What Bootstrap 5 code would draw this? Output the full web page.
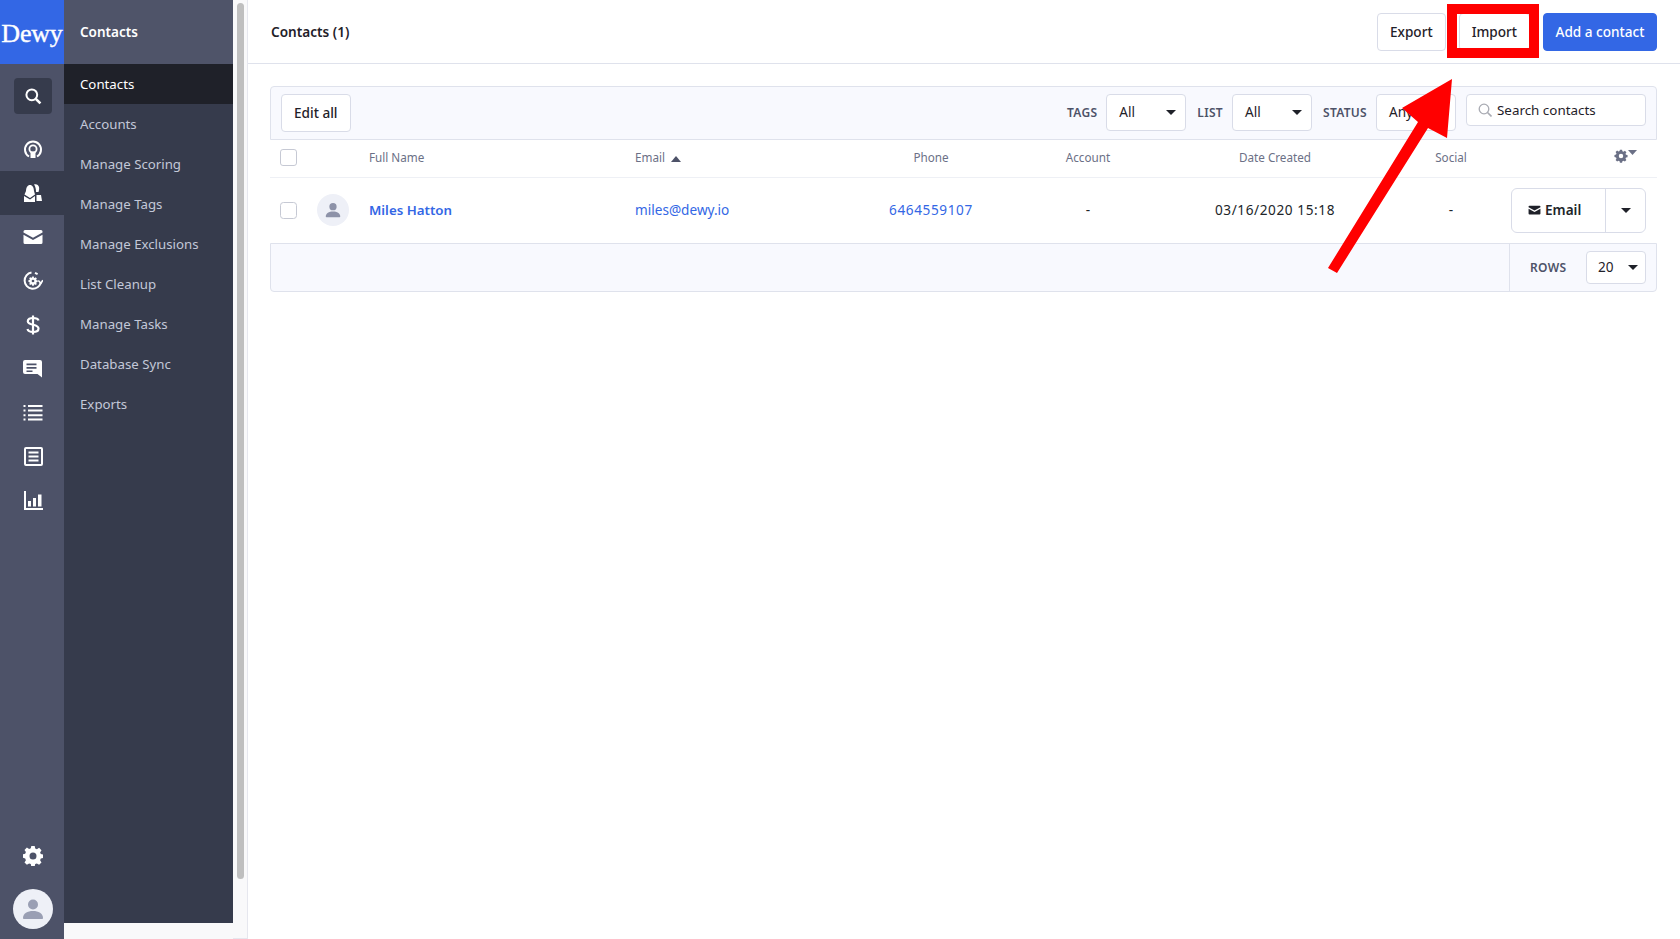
<!DOCTYPE html>
<html lang="en">
<head>
<meta charset="utf-8">
<title>Dewy Contacts</title>
<link href="https://cdn.jsdelivr.net/npm/bootstrap@5.3.0/dist/css/bootstrap.min.css" rel="stylesheet">
<style>
html,body{height:100%;overflow:hidden}
body{font-family:"Noto Sans","Liberation Sans",sans-serif;font-size:14px;color:#1f2129;background:#fff}
.shell{height:939px;width:1680px}
.rail{width:64px;background:#4d5268;flex:none}
.logo-box{height:64px;background:#3367e5;color:#fff;font-family:"Liberation Serif",serif;font-size:26px;font-weight:400;-webkit-text-stroke:.4px #fff;letter-spacing:-.2px;padding-top:2px}
.rail-search{width:38px;height:36px;background:#363b4c;border-radius:4px;margin:14px 0 13px 14px}
.rail-item{height:44px;color:#fff;padding-left:2px}
.rail-item.on{background:#363b4c}
.rail-item.lift{padding-bottom:2px}
.rail-ava{width:40px;height:40px;border-radius:50%;background:#eef0f7;margin:11px 0 10px 13px}
.side-col{width:169px;flex:none;background:#f9f9fa}
.side-head{height:64px;background:#4f5469;color:#fff;font-weight:600;font-size:13.5px;padding-left:16px}
.side-panel{height:859px;background:#363b4c}
.side-link{height:40px;padding:2px 0 0 16px;color:#c3c8d8;text-decoration:none;font-size:13.25px}
.side-link.on{background:#1f2129;color:#fff}
.scroll-col{width:15px;flex:none;background:#f9f9fa;border-right:1px solid #e6e7ee;border-bottom:1px solid #e6e7ee;padding:3px 3px 0 4px}
.scroll-thumb{height:876px;background:#bfbfbf;border-radius:4px}
.main-col{min-width:0;position:relative}
.top-bar{height:64px;border-bottom:1px solid #dfe2ec;padding:1px 23px 0 23px}
.top-title{font-weight:600;font-size:13.6px}
.tbtn{height:38px;padding:0 12px;font-size:13.6px;font-weight:500;border:1px solid #d9dce8;background:#fff;color:#1f2129;border-radius:4px;display:flex;align-items:center}
.tbtn.mr-imp{margin-left:13px;margin-right:13px}
.tbtn.go{background:#3367e5;border-color:#3367e5;color:#fff;padding:0 11.500px}
.tool-wrap{padding:22px 23px 0 22px}
.tool-row{height:54px;background:#f8f9fe;border:1px solid #dfe2ec;border-radius:4px 4px 0 0;padding:7px 10px 0 10px}
.lbl{font-size:12px;font-weight:600;color:#4d5268;letter-spacing:.3px}
.tool-row .lbl{margin:10px 9px 0 11px}
.pick{width:80px;height:37px;background:#fff;border:1px solid #d9dce8;border-radius:4px;padding:0 9px 0 12px;font-size:13.6px;color:#1f2129}
.pick::after{margin:0;border-top-width:.38em;border-left-width:.38em;border-right-width:.38em}
.search-box{width:180px;height:32px;background:#fff;border:1px solid #d9dce8;border-radius:4px;padding:0 11px;font-size:13.4px;margin-left:10px;gap:5px}
.grid-t{table-layout:fixed;width:1387px;margin:0}
.grid-t th{height:37px;padding:0 0 1px;font-weight:400;font-size:11.7px;color:#6b7086;border-bottom:1px solid #eef0f5;vertical-align:middle}
.grid-t td{height:66px;padding:0;font-size:13.6px;border-bottom:0;vertical-align:middle}
.cbox{width:17px;height:17px;margin:0 0 0 10px;border:1px solid #c6c9d4;border-radius:2px;display:block;float:none}
.ava-sm{width:32px;height:32px;border-radius:50%;background:#eef0f7;margin-left:1px}
.txt-link{color:#3367e5;text-decoration:none}
.name-link{font-weight:600;font-size:13.3px}
.cell-text{padding-left:9px!important}
.num-t{letter-spacing:.6px}
.sort-mark{margin-left:3px}
.gear-cell{padding-right:20px!important;padding-bottom:6px!important}
.mail-group{width:135px;height:45px;border:1px solid #d9dce8;border-radius:6px;margin-left:-16px}
.mail-main{width:94px;font-weight:600;font-size:13.6px;border-right:1px solid #d9dce8;padding-left:16px}
.foot-row{height:49px;background:#f8f9fe;border:1px solid #dfe2ec;border-radius:0 0 4px 4px}
.foot-end{width:147px;border-left:1px solid #dfe2ec;padding:0 10px 0 20px}
.rows-pick{width:60px;height:33px;background:#fff;border:1px solid #d9dce8;border-radius:4px;padding:0 7px 0 11px;font-size:13.6px}
.caret-d{width:0;height:0;border-left:5px solid transparent;border-right:5px solid transparent;border-top:5px solid #1f2129}
.anno{position:absolute;left:0;top:0;pointer-events:none}
</style>
</head>
<body>
<div class="shell d-flex">
  <nav class="rail d-flex flex-column">
    <div class="logo-box d-flex align-items-center justify-content-center">Dewy</div>
    <div class="rail-search d-flex align-items-center justify-content-center">
      <svg width="18" height="18" viewBox="0 0 18 18" fill="none" stroke="#fff" stroke-width="2"><circle cx="7.8" cy="7.8" r="5.4"/><path d="M11.8 11.8l4.6 4.6" stroke-width="2.6"/></svg>
    </div>
    <div class="rail-item d-flex align-items-center justify-content-center">
      <svg width="20" height="20" viewBox="0 0 20 20" fill="none" stroke="#fff"><path d="M6 17.5A8 8 0 1 1 14 17.5" stroke-width="2"/><circle cx="10" cy="10" r="3.6" stroke-width="1.8"/><path fill="#fff" stroke="none" d="M7.5 12.5h5V19h-5z"/></svg>
    </div>
    <div class="rail-item on d-flex align-items-center justify-content-center">
      <svg width="20" height="20" viewBox="0 0 20 20" fill="#fff"><path d="M11 1.500c2.500-.8 4.500.5 5 2.500.4 1.500 0 3.500-.5 5h-2.500C13 6 12.500 3.500 11 1.500z"/><path d="M7 2c2.500 0 3.800 2.500 4 6l1 3.500L7 15 1.500 11.500 3 8c.2-3.500 1.500-6 4-6z"/><path d="M1 13l6 3.500 5-3.500V19H1z"/><path d="M13.500 12H18l1 6h-5.500z"/></svg>
    </div>
    <div class="rail-item d-flex align-items-center justify-content-center">
      <svg width="20" height="16" viewBox="0 0 20 16" fill="#fff"><path d="M2 1h16a1.500 1.500 0 0 1 1.500 1.500v1L10 8.800.5 3.500v-1A1.500 1.500 0 0 1 2 1z"/><path d="M.5 5.800L10 11l9.500-5.200v7.700A1.500 1.500 0 0 1 18 15H2a1.500 1.500 0 0 1-1.500-1.500z"/></svg>
    </div>
    <div class="rail-item d-flex align-items-center justify-content-center">
      <svg width="20" height="20" viewBox="0 0 20 20" fill="none" stroke="#fff"><path d="M8.500 1.500A8.200 8.200 0 1 0 17.800 11.500" stroke-width="2"/><path d="M12 1.800l2.600 1.300" stroke-width="2"/><path d="M15.300 9.500l2.700 2.700 1.800-3" stroke-width="1.600"/><g transform="translate(5.500 5.500) scale(.45)"><path fill="#fff" stroke="none" fill-rule="evenodd" d="M8.300 0h3.400l.5 2.500 1.700.7 2.200-1.400 2.400 2.400-1.400 2.200.7 1.700 2.500.5v3.400l-2.500.5-.7 1.700 1.400 2.200-2.400 2.400-2.200-1.400-1.700.7-.5 2.500H8.300l-.5-2.500-1.700-.7-2.200 1.400-2.400-2.400 1.400-2.200-.7-1.700L-.3 11.700V8.300l2.500-.5.7-1.700-1.400-2.200 2.400-2.400 2.200 1.400 1.700-.7zM10 7a3 3 0 1 0 0 6 3 3 0 0 0 0-6z"/></g></svg>
    </div>
    <div class="rail-item d-flex align-items-center justify-content-center">
      <svg width="14" height="20" viewBox="0 0 14 20" fill="none" stroke="#fff" stroke-width="2.200"><path d="M12.500 5.500C12 3.500 10 3 7 3 4 3 1.800 4 1.800 6.200 1.800 11 12.500 8.500 12.500 13.500 12.500 16 10 17 7 17 4 17 2 16 1.500 14"/><path d="M7 .5v19"/></svg>
    </div>
    <div class="rail-item lift d-flex align-items-center justify-content-center">
      <svg width="20" height="19" viewBox="0 0 20 19" fill="#fff"><path fill-rule="evenodd" d="M2 1h15a2 2 0 0 1 2 2v15.500L14.500 15H2a2 2 0 0 1-2-2V3a2 2 0 0 1 2-2zM3.500 4.500v1.800h10V4.500zm0 3.500v1.800h10V8zm0 3.500v1.600h6v-1.600z"/></svg>
    </div>
    <div class="rail-item d-flex align-items-center justify-content-center">
      <svg width="20" height="16" viewBox="0 0 20 16" fill="#fff"><path d="M.5 0h2v2h-2zm0 4.600h2v2h-2zm0 4.600h2v2h-2zm0 4.300h2v2h-2z"/><path d="M5 0h14.500v2H5zm0 4.600h14.500v2H5zm0 4.600h14.500v2H5zm0 4.300h14.500v2H5z"/></svg>
    </div>
    <div class="rail-item lift d-flex align-items-center justify-content-center">
      <svg width="19" height="19" viewBox="0 0 19 19" fill="none" stroke="#fff" stroke-width="2"><rect x="1" y="1" width="17" height="17" rx="1"/><path d="M4.500 5.500h10M4.500 9.500h10M4.500 13.500h10"/></svg>
    </div>
    <div class="rail-item lift d-flex align-items-center justify-content-center">
      <svg width="19" height="19" viewBox="0 0 19 19" fill="#fff"><path d="M0 0h2v17h17v2H0z"/><path d="M4 10h3v5.500H4zm5-3h3v8.500H9zm5-3.500h3.500v12H14z"/></svg>
    </div>
    <div class="rail-item d-flex align-items-center justify-content-center mt-auto">
      <svg width="20" height="20" viewBox="0 0 20 20" fill="#fff"><path fill-rule="evenodd" d="M8.300 0h3.400l.5 2.500 1.700.7 2.200-1.400 2.400 2.400-1.400 2.200.7 1.700 2.500.5v3.400l-2.500.5-.7 1.700 1.400 2.200-2.400 2.400-2.200-1.400-1.700.7-.5 2.500H8.300l-.5-2.500-1.700-.7-2.200 1.400-2.400-2.400 1.400-2.200-.7-1.700L-.3 11.700V8.300l2.500-.5.7-1.700-1.400-2.200 2.400-2.400 2.200 1.400 1.700-.7zM10 6.500a3.500 3.500 0 1 0 0 7 3.500 3.500 0 0 0 0-7z"/></svg>
    </div>
    <div class="rail-ava d-flex align-items-center justify-content-center">
      <svg width="22" height="22" viewBox="0 0 22 22" fill="#9a9fb4"><circle cx="11" cy="6.500" r="5"/><path d="M1 20c0-4.500 4.500-7 10-7s10 2.500 10 7c0 .6-.5 1-1 1H2c-.5 0-1-.4-1-1z"/></svg>
    </div>
  </nav>

  <div class="side-col">
    <div class="side-head d-flex align-items-center">Contacts</div>
    <div class="side-panel">
      <a class="side-link on d-flex align-items-center" href="#">Contacts</a>
      <a class="side-link d-flex align-items-center" href="#">Accounts</a>
      <a class="side-link d-flex align-items-center" href="#">Manage Scoring</a>
      <a class="side-link d-flex align-items-center" href="#">Manage Tags</a>
      <a class="side-link d-flex align-items-center" href="#">Manage Exclusions</a>
      <a class="side-link d-flex align-items-center" href="#">List Cleanup</a>
      <a class="side-link d-flex align-items-center" href="#">Manage Tasks</a>
      <a class="side-link d-flex align-items-center" href="#">Database Sync</a>
      <a class="side-link d-flex align-items-center" href="#">Exports</a>
    </div>
  </div>
  <div class="scroll-col"><div class="scroll-thumb"></div></div>

  <main class="main-col flex-grow-1">
    <header class="top-bar d-flex align-items-center">
      <div class="top-title me-auto">Contacts (1)</div>
      <button class="tbtn" type="button">Export</button>
      <button class="tbtn mr-imp" type="button">Import</button>
      <button class="tbtn go" type="button">Add a contact</button>
    </header>

    <section class="tool-wrap">
      <div class="tool-row d-flex align-items-start">
        <button class="tbtn me-auto" type="button">Edit all</button>
        <span class="lbl">TAGS</span>
        <button class="pick dropdown-toggle d-flex align-items-center justify-content-between" type="button">All</button>
        <span class="lbl">LIST</span>
        <button class="pick dropdown-toggle d-flex align-items-center justify-content-between" type="button">All</button>
        <span class="lbl">STATUS</span>
        <button class="pick dropdown-toggle d-flex align-items-center justify-content-between" type="button">Any</button>
        <div class="search-box d-flex align-items-center">
          <svg width="14" height="14" viewBox="0 0 14 14" fill="none" stroke="#a9abb3" stroke-width="1.300"><circle cx="6" cy="6" r="4.800"/><path d="M9.500 9.500l4 4" stroke-width="1.600"/></svg>
          <span>Search contacts</span>
        </div>
      </div>

      <table class="table grid-t">
        <colgroup>
          <col style="width:46px"><col style="width:44px"><col style="width:266px"><col style="width:235px"><col style="width:140px"><col style="width:174px"><col style="width:200px"><col style="width:152px"><col style="width:130px">
        </colgroup>
        <thead>
          <tr>
            <th><input class="form-check-input cbox" type="checkbox" aria-label="Select all"></th>
            <th></th>
            <th class="cell-text">Full Name</th>
            <th class="cell-text">Email <svg class="sort-mark" width="10" height="6" viewBox="0 0 10 6" fill="#4d5268"><path d="M5 0l5 6H0z"/></svg></th>
            <th class="text-center">Phone</th>
            <th class="text-center">Account</th>
            <th class="text-center">Date Created</th>
            <th class="text-center">Social</th>
            <th class="text-end gear-cell">
              <svg width="14" height="14" viewBox="-1 -1 22 22" fill="#6b7086"><path fill-rule="evenodd" d="M8.300 0h3.400l.5 2.500 1.700.7 2.200-1.400 2.400 2.400-1.400 2.200.7 1.700 2.500.5v3.400l-2.500.5-.7 1.700 1.400 2.200-2.400 2.400-2.200-1.400-1.700.7-.5 2.500H8.300l-.5-2.500-1.700-.7-2.200 1.400-2.400-2.400 1.400-2.200-.7-1.700L-.3 11.700V8.300l2.500-.5.7-1.700-1.400-2.200 2.400-2.400 2.200 1.400 1.700-.7zM10 6.500a3.500 3.500 0 1 0 0 7 3.500 3.500 0 0 0 0-7z"/></svg><svg width="9" height="5" viewBox="0 0 9 5" fill="#6b7086" class="align-top mt-1"><path d="M0 0h9L4.500 5z"/></svg>
            </th>
          </tr>
        </thead>
        <tbody>
          <tr>
            <td><input class="form-check-input cbox" type="checkbox" aria-label="Select row"></td>
            <td><div class="ava-sm d-flex align-items-center justify-content-center"><svg width="16" height="16" viewBox="0 0 22 22" fill="#8d92a8"><circle cx="11" cy="6.500" r="5"/><path d="M1 20c0-4.500 4.500-7 10-7s10 2.500 10 7c0 .6-.5 1-1 1H2c-.5 0-1-.4-1-1z"/></svg></div></td>
            <td class="cell-text"><a class="txt-link name-link" href="#">Miles Hatton</a></td>
            <td class="cell-text"><a class="txt-link" href="#">miles@dewy.io</a></td>
            <td class="text-center"><a class="txt-link num-t" href="#">6464559107</a></td>
            <td class="text-center">-</td>
            <td class="text-center num-t">03/16/2020 15:18</td>
            <td class="text-center">-</td>
            <td>
              <div class="mail-group d-flex">
                <div class="mail-main d-flex align-items-center gap-1">
                  <svg width="13" height="10" viewBox="0 0 20 16" fill="#1f2129"><path d="M2 1h16a1.500 1.500 0 0 1 1.500 1.500v1L10 8.800.5 3.500v-1A1.500 1.500 0 0 1 2 1z"/><path d="M.5 5.800L10 11l9.500-5.200v7.700A1.500 1.500 0 0 1 18 15H2a1.500 1.500 0 0 1-1.500-1.500z"/></svg>Email
                </div>
                <div class="flex-grow-1 d-flex align-items-center justify-content-center"><span class="caret-d"></span></div>
              </div>
            </td>
          </tr>
        </tbody>
      </table>

      <div class="foot-row d-flex justify-content-end">
        <div class="foot-end d-flex align-items-center justify-content-between">
          <span class="lbl">ROWS</span>
          <div class="rows-pick d-flex align-items-center justify-content-between">20 <span class="caret-d"></span></div>
        </div>
      </div>
    </section>

    <svg class="anno" width="1432" height="300" viewBox="248 0 1432 300" fill="#ff0000" aria-hidden="true">
      <path fill-rule="evenodd" d="M1447 4h92v54h-92zM1457 14v34h72V14z"/>
      <path d="M1452 79L1402 108L1418 122L1328 268L1337 273L1428 128L1447 138z"/>
    </svg>
  </main>
</div>
<script src="https://cdn.jsdelivr.net/npm/bootstrap@5.3.0/dist/js/bootstrap.bundle.min.js"></script>
</body>
</html>
